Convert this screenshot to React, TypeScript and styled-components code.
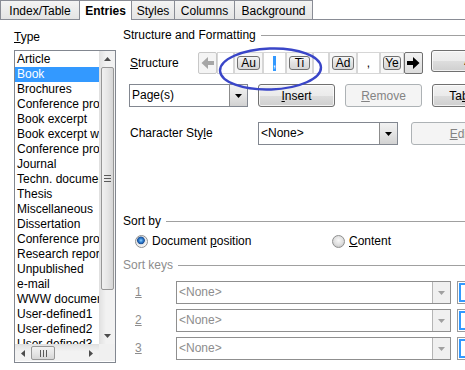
import React from 'react';
import styled, { createGlobalStyle } from 'styled-components';

const Global = createGlobalStyle`
  html, body { margin: 0; padding: 0; background: #fff; }
  body {
    font-family: "Liberation Sans", Arial, sans-serif;
    font-size: 12px;
    color: #000;
  }
  * { box-sizing: border-box; }
`;

const Frame = styled.div`
  position: relative;
  width: 465px;
  height: 370px;
  overflow: hidden;
  background: #fff;
`;

const TabBar = styled.div`
  display: flex;
  align-items: flex-end;
  height: 20px;
  border-bottom: 1px solid #898c95;
`;

const Tab = styled.div<{ $w: number; $active?: boolean }>`
  position: relative;
  z-index: ${(p) => (p.$active ? 1 : 0)};
  width: ${(p) => p.$w}px;
  height: ${(p) => (p.$active ? 20 : 19)}px;
  margin-bottom: ${(p) => (p.$active ? -1 : 0)}px;
  margin-right: -1px;
  border: 1px solid #898c95;
  border-bottom: none;
  background: ${(p) => (p.$active ? '#fff' : 'linear-gradient(#f3f3f3, #e4e4e4)')};
  font-weight: ${(p) => (p.$active ? 'bold' : 'normal')};
  display: flex;
  align-items: center;
  justify-content: center;
  padding-top: ${(p) => (p.$active ? 0 : 1)}px;
  white-space: nowrap;
`;

const Content = styled.div`
  display: flex;
  height: 350px;
`;

const TypeColumn = styled.div`
  width: 102px;
  margin-left: 14px;
  display: flex;
  flex-direction: column;
`;

const FieldLabel = styled.div`
  height: 14px;
  line-height: 14px;
  margin-top: 10px;
  white-space: nowrap;
`;

const U = styled.span`
  text-decoration: underline;
`;

const ListBox = styled.div`
  margin-top: 6px;
  height: 313px;
  border: 1px solid #828790;
  display: grid;
  grid-template-columns: 84px 16px;
  grid-template-rows: 293px 17px;
  background: #fff;
`;

const Items = styled.div`
  overflow: hidden;
  padding-top: 1px;
`;

const Item = styled.div<{ $selected?: boolean }>`
  height: 15px;
  line-height: 15px;
  padding-left: 2px;
  white-space: nowrap;
  overflow: hidden;
  background: ${(p) => (p.$selected ? '#3399ff' : 'transparent')};
  color: ${(p) => (p.$selected ? '#fff' : '#000')};
`;

const VScroll = styled.div`
  display: flex;
  flex-direction: column;
  background: linear-gradient(90deg, #e3e3e3, #f2f2f2 40%, #f2f2f2);
  border-left: 1px solid #e0e0e0;
`;

const ScrollArrow = styled.div<{ $vertical?: boolean }>`
  flex: none;
  width: ${(p) => (p.$vertical ? '100%' : '16px')};
  height: ${(p) => (p.$vertical ? '16px' : '100%')};
  display: flex;
  align-items: center;
  justify-content: center;
`;

const VThumb = styled.div`
  flex: none;
  height: 223px;
  margin: 0 1px 0 1px;
  border: 1px solid #979797;
  border-radius: 2px;
  background: linear-gradient(90deg, #f1f1f1, #e6e6e6 50%, #d6d6d6);
  display: flex;
  align-items: center;
  justify-content: center;
`;

const Track = styled.div`
  flex: 1;
`;

const HScroll = styled.div`
  display: flex;
  background: linear-gradient(#e3e3e3, #f2f2f2 40%, #f2f2f2);
  border-top: 1px solid #e0e0e0;
`;

const HThumb = styled.div`
  flex: none;
  width: 24px;
  margin: 1px 0;
  border: 1px solid #979797;
  border-radius: 2px;
  background: linear-gradient(#f1f1f1, #e6e6e6 50%, #d6d6d6);
  display: flex;
  align-items: center;
  justify-content: center;
`;

const Corner = styled.div`
  background: #f0f0f0;
`;

const Right = styled.div`
  flex: 1;
  margin-left: 7px;
  padding-top: 8px;
  display: flex;
  flex-direction: column;
`;

const Heading = styled.div<{ $disabled?: boolean; $top?: number }>`
  display: flex;
  align-items: center;
  gap: 5px;
  height: 14px;
  margin-top: ${(p) => p.$top ?? 0}px;
  color: ${(p) => (p.$disabled ? '#8d8d8d' : '#000')};
  white-space: nowrap;
  &::after {
    content: '';
    flex: 1;
    height: 1px;
    background: #a0a0a0;
  }
`;

const Row = styled.div<{ $top: number; $indent: number }>`
  display: flex;
  align-items: flex-start;
  margin-top: ${(p) => p.$top}px;
  padding-left: ${(p) => p.$indent}px;
  white-space: nowrap;
`;

const RowLabel = styled.div<{ $w: number; $h: number; $disabled?: boolean }>`
  flex: none;
  width: ${(p) => p.$w}px;
  line-height: ${(p) => p.$h}px;
  color: ${(p) => (p.$disabled ? '#8d8d8d' : '#000')};
`;

const StructureBar = styled.div`
  display: flex;
  height: 22px;
  flex: none;
`;

const ArrowButton = styled.div<{ $enabled?: boolean }>`
  width: 19px;
  height: 22px;
  border: 1px solid ${(p) => (p.$enabled ? '#707070' : '#c8c8c8')};
  border-radius: 2px;
  background: ${(p) => (p.$enabled ? 'linear-gradient(#f2f2f2, #dcdcdc)' : '#f4f4f4')};
  display: flex;
  align-items: center;
  justify-content: center;
`;

const EntryField = styled.div<{ $w: number }>`
  width: ${(p) => p.$w}px;
  height: 22px;
  border: 1px solid #d6d6d6;
  background: #fff;
  display: flex;
  align-items: center;
  justify-content: center;
`;

const Sel = styled.span`
  background: #3399ff;
  color: #fff;
  height: 15px;
  line-height: 15px;
`;

const TokenFrame = styled.div<{ $w: number }>`
  width: ${(p) => p.$w}px;
  height: 22px;
  border: 1px solid #d6d6d6;
  background: #f7f7f7;
  padding: 3px 2px;
  display: flex;
`;

const Token = styled.div`
  flex: 1;
  border: 1px solid #707070;
  border-radius: 3px;
  background: linear-gradient(#f6f6f6, #e2e2e2 50%, #d6d6d6);
  display: flex;
  align-items: center;
  justify-content: center;
  line-height: 13px;
`;

const Button = styled.div<{ $w: number; $h?: number; $left?: number; $top?: number; $disabled?: boolean }>`
  flex: none;
  width: ${(p) => p.$w}px;
  height: ${(p) => p.$h ?? 23}px;
  margin-left: ${(p) => p.$left ?? 0}px;
  margin-top: ${(p) => p.$top ?? 0}px;
  border: 1px solid ${(p) => (p.$disabled ? '#adb2b5' : '#707070')};
  border-radius: 3px;
  background: ${(p) =>
    p.$disabled ? '#f4f4f4' : 'linear-gradient(#f2f2f2, #ebebeb 50%, #dddddd 51%, #cfcfcf)'};
  box-shadow: inset 0 0 0 1px ${(p) => (p.$disabled ? '#f4f4f4' : 'rgba(255,255,255,0.7)')};
  color: ${(p) => (p.$disabled ? '#838383' : '#000')};
  display: flex;
  align-items: center;
  justify-content: center;
  white-space: nowrap;
  overflow: hidden;
`;

const Combo = styled.div<{ $w: number; $disabled?: boolean }>`
  flex: none;
  width: ${(p) => p.$w}px;
  height: 23px;
  border: 1px solid ${(p) => (p.$disabled ? '#8f8f8f' : '#828790')};
  background: #fff;
  display: flex;
  color: ${(p) => (p.$disabled ? '#8d8d8d' : '#000')};
`;

const ComboText = styled.div`
  flex: 1;
  padding-left: 2px;
  line-height: 21px;
  overflow: hidden;
`;

const DropButton = styled.div<{ $disabled?: boolean }>`
  width: 18px;
  border-left: 1px solid ${(p) => (p.$disabled ? '#b5b5b5' : '#8c8c8c')};
  background: ${(p) => (p.$disabled ? '#f0f0f0' : 'linear-gradient(#f2f2f2, #e4e4e4 50%, #d2d2d2)')};
  display: flex;
  align-items: center;
  justify-content: center;
`;

const RadioRow = styled.div`
  display: grid;
  grid-template-columns: 197px auto;
  margin-top: 6px;
  padding-left: 12px;
  height: 14px;
`;

const RadioItem = styled.div`
  display: flex;
  align-items: center;
  gap: 4px;
  white-space: nowrap;
`;

const RadioDot = styled.span<{ $checked?: boolean }>`
  width: 13px;
  height: 13px;
  border-radius: 50%;
  border: 1px solid #8e8f8f;
  background: ${(p) =>
    p.$checked
      ? 'radial-gradient(circle at 45% 40%, #8fd0ff 0, #2f7fd0 2px, #1d4f95 3.5px, #e6e6e6 4.2px, #f4f4f4 6px)'
      : 'radial-gradient(circle at 50% 40%, #f8f8f8 0, #dcdcdc 5px, #cfcfcf 6px)'};
`;

const SortButton = styled.div`
  flex: none;
  width: 24px;
  height: 23px;
  margin-left: 6px;
  border: 1px solid #9a9a9a;
  padding: 1px;
  display: flex;
`;

const SortInner = styled.div`
  flex: 1;
  border: 2px solid #3399ff;
  background: #fff;
`;

const Overlay = styled.svg`
  position: absolute;
  left: 0;
  top: 0;
  pointer-events: none;
`;

const Tri = ({ dir, color = '#4d4d4d' }: { dir: 'up' | 'down' | 'left' | 'right'; color?: string }) => {
  const pts = {
    up: '0,4 7,4 3.5,0',
    down: '0,0 7,0 3.5,4',
    left: '4,0 4,7 0,3.5',
    right: '0,0 0,7 4,3.5',
  }[dir];
  const w = dir === 'up' || dir === 'down' ? 7 : 4;
  const h = dir === 'up' || dir === 'down' ? 4 : 7;
  return (
    <svg width={w} height={h} viewBox={`0 0 ${w} ${h}`}>
      <polygon points={pts} fill={color} />
    </svg>
  );
};

const BlockArrow = ({ dir, color }: { dir: 'left' | 'right'; color: string }) => (
  <svg width="13" height="12" viewBox="0 0 13 12">
    <polygon
      points={dir === 'right' ? '0,4 6,4 6,0 12.5,6 6,12 6,8 0,8' : '13,4 7,4 7,0 0.5,6 7,12 7,8 13,8'}
      fill={color}
    />
  </svg>
);

const Grip = ({ vertical }: { vertical?: boolean }) => (
  <svg width={vertical ? 7 : 7} height={vertical ? 7 : 7} viewBox="0 0 7 7">
    {[0, 3, 6].map((o) =>
      vertical ? (
        <rect key={o} x="0" y={o} width="7" height="1" fill="#5a5a5a" />
      ) : (
        <rect key={o} x={o} y="0" width="1" height="7" fill="#5a5a5a" />
      )
    )}
  </svg>
);

const types = [
  'Article',
  'Book',
  'Brochures',
  'Conference proceedings',
  'Book excerpt',
  'Book excerpt with title',
  'Conference proceedings',
  'Journal',
  'Techn. documentation',
  'Thesis',
  'Miscellaneous',
  'Dissertation',
  'Conference proceedings',
  'Research report',
  'Unpublished',
  'e-mail',
  'WWW document',
  'User-defined1',
  'User-defined2',
  'User-defined3',
  'User-defined4',
];

const tabs = [
  { label: 'Index/Table', w: 80 },
  { label: 'Entries', w: 53, active: true },
  { label: 'Styles', w: 44 },
  { label: 'Columns', w: 61 },
  { label: 'Background', w: 79 },
];

export default function App() {
  return (
    <Frame>
      <Global />
      <TabBar>
        {tabs.map((t) => (
          <Tab key={t.label} $w={t.w} $active={t.active}>
            {t.label}
          </Tab>
        ))}
      </TabBar>
      <Content>
        <TypeColumn>
          <FieldLabel>
            <U>T</U>ype
          </FieldLabel>
          <ListBox>
            <Items>
              {types.map((t, i) => (
                <Item key={i} $selected={i === 1}>
                  {t}
                </Item>
              ))}
            </Items>
            <VScroll>
              <ScrollArrow $vertical>
                <Tri dir="up" />
              </ScrollArrow>
              <VThumb>
                <Grip vertical />
              </VThumb>
              <Track />
              <ScrollArrow $vertical>
                <Tri dir="down" />
              </ScrollArrow>
            </VScroll>
            <HScroll>
              <ScrollArrow>
                <Tri dir="left" />
              </ScrollArrow>
              <HThumb>
                <Grip />
              </HThumb>
              <Track />
              <ScrollArrow>
                <Tri dir="right" />
              </ScrollArrow>
            </HScroll>
            <Corner />
          </ListBox>
        </TypeColumn>

        <Right>
          <Heading>Structure and Formatting</Heading>

          <Row $top={10} $indent={7}>
            <RowLabel $w={68} $h={22}>
              <U>S</U>tructure
            </RowLabel>
            <StructureBar>
              <ArrowButton>
                <BlockArrow dir="left" color="#a6a6a6" />
              </ArrowButton>
              <EntryField $w={17} />
              <TokenFrame $w={29}>
                <Token>Au</Token>
              </TokenFrame>
              <EntryField $w={23}>
                <Sel>,</Sel>
              </EntryField>
              <TokenFrame $w={27}>
                <Token>Ti</Token>
              </TokenFrame>
              <EntryField $w={16} />
              <TokenFrame $w={28}>
                <Token>Ad</Token>
              </TokenFrame>
              <EntryField $w={23}>,</EntryField>
              <TokenFrame $w={24}>
                <Token>Ye</Token>
              </TokenFrame>
              <ArrowButton $enabled>
                <BlockArrow dir="right" color="#000" />
              </ArrowButton>
            </StructureBar>
            <Button $w={80} $h={22} $left={8} $top={-2}>
              All
            </Button>
          </Row>

          <Row $top={10} $indent={6}>
            <Combo $w={119}>
              <ComboText>Page(s)</ComboText>
              <DropButton>
                <Tri dir="down" color="#000" />
              </DropButton>
            </Combo>
            <Button $w={77} $left={10}>
              <span>
                <U>I</U>nsert
              </span>
            </Button>
            <Button $w={77} $left={10} $disabled>
              <span>
                <U>R</U>emove
              </span>
            </Button>
            <Button $w={80} $left={10}>
              <span>
                Ta<U>b</U> stop
              </span>
            </Button>
          </Row>

          <Row $top={15} $indent={7}>
            <RowLabel $w={128} $h={23}>
              Character Sty<U>l</U>e
            </RowLabel>
            <Combo $w={140}>
              <ComboText>&lt;None&gt;</ComboText>
              <DropButton>
                <Tri dir="down" color="#000" />
              </DropButton>
            </Combo>
            <Button $w={108} $left={13} $disabled>
              <span>
                <U>E</U>dit...
              </span>
            </Button>
          </Row>

          <Heading $top={69}>Sort by</Heading>
          <RadioRow>
            <RadioItem>
              <RadioDot $checked />
              <span>
                Document <U>p</U>osition
              </span>
            </RadioItem>
            <RadioItem>
              <RadioDot />
              <span>
                <U>C</U>ontent
              </span>
            </RadioItem>
          </RadioRow>

          <Heading $top={10} $disabled>
            Sort keys
          </Heading>

          {['1', '2', '3'].map((n, i) => (
            <Row key={n} $top={i === 0 ? 9 : 5} $indent={12}>
              <RowLabel $w={41} $h={23} $disabled>
                <U>{n}</U>
              </RowLabel>
              <Combo $w={275} $disabled>
                <ComboText>&lt;None&gt;</ComboText>
                <DropButton $disabled>
                  <Tri dir="down" color="#a0a0a0" />
                </DropButton>
              </Combo>
              <SortButton>
                <SortInner />
              </SortButton>
            </Row>
          ))}
        </Right>
      </Content>

      <Overlay width="465" height="370" viewBox="0 0 465 370">
        <ellipse
          cx="270.5"
          cy="69"
          rx="50.5"
          ry="20.5"
          fill="none"
          stroke="#3a46c8"
          strokeWidth="2.4"
          transform="rotate(-2 270.5 69)"
        />
      </Overlay>
    </Frame>
  );
}
